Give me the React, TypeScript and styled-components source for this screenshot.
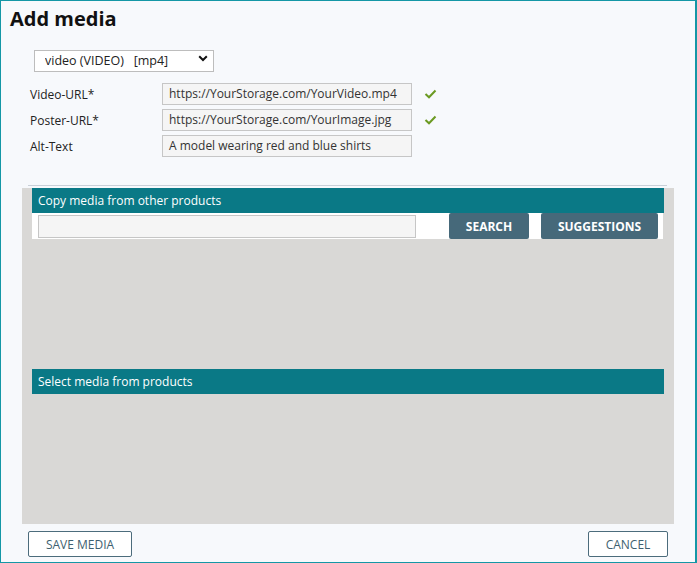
import styled, { createGlobalStyle } from "styled-components";

const GlobalStyle = createGlobalStyle`
  body {
    margin: 0;
    font-family: "Open Sans", "Noto Sans", sans-serif;
    background: #f7f9fc;
  }
  * { box-sizing: border-box; }
`;

const Frame = styled.div`
  width: 697px;
  height: 563px;
  border: 1px solid #1497a6;
  border-right-width: 2px;
  background: #f7f9fc;
  display: flex;
  flex-direction: column;
`;

const Title = styled.h1`
  margin: 5px 0 0 9px;
  font-size: 20px;
  line-height: 26px;
  font-weight: 700;
  color: #111;
`;

const Form = styled.div`
  padding-left: 29px;
  display: flex;
  flex-direction: column;
`;

const SelectWrap = styled.div`
  position: relative;
  margin: 16px 0 0 4px;
  width: 180px;
  height: 22px;
`;

const Select = styled.select`
  appearance: none;
  width: 100%;
  height: 100%;
  border: 1px solid #bdbdbd;
  background: #fff;
  font-family: inherit;
  font-size: 12.5px;
  color: #222;
  padding: 0 0 0 10px;
  outline: none;
`;

const Chevron = styled.svg`
  position: absolute;
  right: 6px;
  top: 7px;
  pointer-events: none;
`;

const Rows = styled.div`
  margin-top: 13px;
  display: flex;
  flex-direction: column;
  gap: 4px;
`;

const Row = styled.div`
  display: flex;
  align-items: center;
  height: 22px;
`;

const Label = styled.label`
  width: 132px;
  font-size: 12px;
  color: #222;
`;

const TextInput = styled.div`
  width: 250px;
  height: 22px;
  border: 1px solid #c6c6c6;
  background: #f5f5f5;
  font-size: 12px;
  color: #333;
  padding: 0 6px;
  line-height: 20px;
  white-space: nowrap;
  overflow: hidden;
`;

const Check = styled.svg`
  margin-left: 12px;
`;

const Separator = styled.hr`
  margin: 28px 28px 0 27px;
  border: none;
  border-top: 1px solid #c9d0d8;
  height: 0;
`;

const Panel = styled.div`
  margin: 2px 21px 0 21px;
  height: 336px;
  flex-shrink: 0;
  background: #d9d8d6;
  padding: 0 10px;
  display: flex;
  flex-direction: column;
`;

const BarHeader = styled.div<{ $top?: number }>`
  margin-top: ${(p) => p.$top ?? 0}px;
  height: 25px;
  background: #0a7986;
  color: #fff;
  font-size: 12px;
  line-height: 25px;
  padding-left: 6px;
`;

const SearchRow = styled.div`
  height: 26px;
  background: #fff;
  display: flex;
  align-items: flex-start;
  padding: 0 6px;
  margin-right: 1px;
`;

const SearchInput = styled.div`
  flex-shrink: 0;
  width: 378px;
  height: 23px;
  margin-top: 2px;
  border: 1px solid #c6c6c6;
  background: #f5f5f5;
  margin-right: 33px;
`;

const SolidButton = styled.button<{ $w: number }>`
  flex-shrink: 0;
  width: ${(p) => p.$w}px;
  height: 26px;
  border: none;
  border-radius: 2px;
  background: #46697a;
  color: #fff;
  font-family: inherit;
  font-size: 12px;
  font-weight: 700;
  text-transform: uppercase;
  padding: 0;
  & + & {
    margin-left: 12px;
  }
`;

const Footer = styled.div`
  display: flex;
  justify-content: space-between;
  padding: 7px 27px 0 27px;
`;

const OutlineButton = styled.button<{ $w: number }>`
  width: ${(p) => p.$w}px;
  height: 26px;
  border: 1px solid #4c6c7c;
  border-radius: 2px;
  background: #fff;
  color: #3e5f70;
  font-family: inherit;
  font-size: 12px;
  text-transform: uppercase;
  padding: 0;
`;

const fields = [
  { label: "Video-URL*", value: "https://YourStorage.com/YourVideo.mp4", ok: true },
  { label: "Poster-URL*", value: "https://YourStorage.com/YourImage.jpg", ok: true },
  { label: "Alt-Text", value: "A model wearing red and blue shirts", ok: false },
];

export default function App() {
  return (
    <Frame>
      <GlobalStyle />
      <Title>Add media</Title>
      <Form>
        <SelectWrap>
          <Select defaultValue="video">
            <option value="video">video (VIDEO)&nbsp;&nbsp;&nbsp;[mp4]</option>
          </Select>
          <Chevron width="10" height="7" viewBox="0 0 10 7">
            <path d="M1.2 1.2 L5 5 L8.8 1.2" fill="none" stroke="#111" strokeWidth="2" />
          </Chevron>
        </SelectWrap>
        <Rows>
          {fields.map((f) => (
            <Row key={f.label}>
              <Label>{f.label}</Label>
              <TextInput>{f.value}</TextInput>
              {f.ok && (
                <Check width="13" height="10" viewBox="0 0 13 10">
                  <path d="M1.5 5 L5 8.3 L11.5 1.5" fill="none" stroke="#6b9a22" strokeWidth="2" />
                </Check>
              )}
            </Row>
          ))}
        </Rows>
      </Form>
      <Separator />
      <Panel>
        <BarHeader>Copy media from other products</BarHeader>
        <SearchRow>
          <SearchInput />
          <SolidButton $w={80}>Search</SolidButton>
          <SolidButton $w={117}>Suggestions</SolidButton>
        </SearchRow>
        <BarHeader $top={130}>Select media from products</BarHeader>
      </Panel>
      <Footer>
        <OutlineButton $w={104}>Save media</OutlineButton>
        <OutlineButton $w={80}>Cancel</OutlineButton>
      </Footer>
    </Frame>
  );
}
